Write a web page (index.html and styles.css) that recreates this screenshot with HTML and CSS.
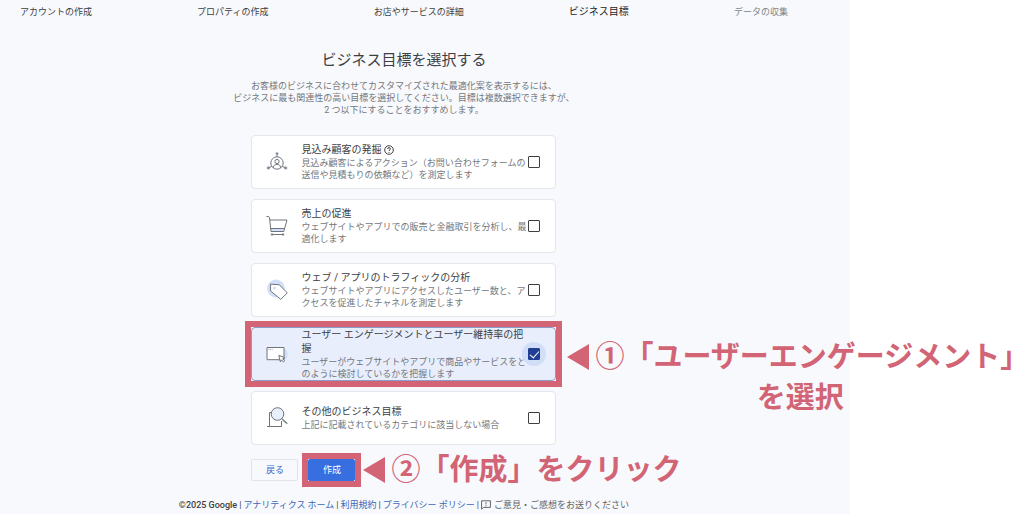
FILE: index.html
```
<!DOCTYPE html>
<html lang="ja">
  <head>
    <meta charset="UTF-8" />
    <meta name="viewport" content="width=device-width, initial-scale=1" />
    <title>ビジネス目標を選択する</title>
    <link rel="stylesheet" href="styles.css">
  </head>
  <body>
    <div class="app">
      <ol class="steps">
        <li>アカウントの作成</li>
        <li>プロパティの作成</li>
        <li>お店やサービスの詳細</li>
        <li class="current">ビジネス目標</li>
        <li class="upcoming">データの収集</li>
      </ol>

      <main>
        <h1>ビジネス目標を選択する</h1>
        <p class="intro">
          お客様のビジネスに合わせてカスタマイズされた最適化案を表示するには、<br />
          ビジネスに最も関連性の高い目標を選択してください。目標は複数選択できますが、<br />
          2 つ以下にすることをおすすめします。
        </p>

        <form class="goals">
          <label class="goal">
            <svg class="goal-icon" viewBox="0 0 22 22">
              <g class="tint">
                <circle cx="11" cy="2.5" r="1.8" />
                <circle cx="2" cy="17" r="1.8" />
                <circle cx="20" cy="17" r="1.8" />
              </g>
              <circle cx="11" cy="12" r="6.2" />
              <circle cx="11" cy="10.5" r="2.1" />
              <path d="M7.6 17v-1.2c0-1.5 1.3-2.3 3.4-2.3s3.4.8 3.4 2.3V17M11 5.8V2M9.8 3L11 1.8 12.2 3M5.8 15.3L2 17.2M2.3 15.5L1.6 17.4l2 .5M16.2 15.3l3.8 1.9M19.7 15.5l.7 1.9-2 .5" />
            </svg>
            <span class="goal-text">
              <span class="goal-title">見込み顧客の発掘
                <svg class="help" viewBox="0 0 10 10">
                  <circle cx="5" cy="5" r="4.3" />
                  <path d="M3.6 4c0-.9.6-1.4 1.4-1.4s1.4.5 1.4 1.3c0 1-1.4 1.1-1.4 2.1M5 7v.9" />
                </svg>
              </span>
              <span class="goal-desc">見込み顧客によるアクション（お問い合わせフォームの送信や見積もりの依頼など）を測定します</span>
            </span>
            <span class="check"><input type="checkbox" name="goal" /></span>
          </label>

          <label class="goal">
            <svg class="goal-icon" viewBox="0 0 22 22">
              <path class="tint" d="M4.6 13.5h14l-.8 3H5z" />
              <path d="M.5 1.5h1.7q1.2 0 1.3 1.2L5 16.5h12.8L21 5H3.8M4.7 13.5h13.8M5.5 19.5h12" />
              <circle cx="6" cy="19.5" r=".8" />
              <circle cx="17" cy="19.5" r=".8" />
            </svg>
            <span class="goal-text">
              <span class="goal-title">売上の促進</span>
              <span class="goal-desc">ウェブサイトやアプリでの販売と金融取引を分析し、最適化します</span>
            </span>
            <span class="check"><input type="checkbox" name="goal" /></span>
          </label>

          <label class="goal">
            <svg class="goal-icon" viewBox="0 0 22 22">
              <circle class="tint" cx="10" cy="9.5" r="9" />
              <path class="paper" d="M4.5 5.2l8.6.5 8.2 8.1-6.5 6.6L4.6 12z" />
              <circle class="tint" cx="8.5" cy="9" r="1.6" />
            </svg>
            <span class="goal-text">
              <span class="goal-title">ウェブ / アプリのトラフィックの分析</span>
              <span class="goal-desc">ウェブサイトやアプリにアクセスしたユーザー数と、アクセスを促進したチャネルを測定します</span>
            </span>
            <span class="check"><input type="checkbox" name="goal" /></span>
          </label>

          <div class="marked">
            <label class="goal selected">
              <svg class="goal-icon" viewBox="0 0 22 22">
                <circle class="tint" cx="15" cy="11.5" r="6.8" />
                <path class="paper" d="M1 4.5h17v12.2H1z" />
                <path d="M2.6 6.4h.6M4.2 6.4h.6M5.8 6.4h.6" />
                <path class="paper" d="M12.8 12.4l6 2.3-2.1 1.1 2 2.1-1.2 1.1-2-2.1-1.1 1.9z" />
              </svg>
              <span class="goal-text">
                <span class="goal-title">ユーザー エンゲージメントとユーザー維持率の把握</span>
                <span class="goal-desc">ユーザーがウェブサイトやアプリで商品やサービスをどのように検討しているかを把握します</span>
              </span>
              <span class="check"><input type="checkbox" name="goal" checked /></span>
            </label>
            <p class="note">
              <svg class="arrow" viewBox="0 0 22 26"><path d="M0 13L22 0v26z" /></svg>①「ユーザーエンゲージメント<span class="closing">」</span>
              <span class="second-line">を選択</span>
            </p>
          </div>

          <label class="goal">
            <svg class="goal-icon" viewBox="0 0 22 22">
              <path d="M6 5.5H3.5v14M1 19.5h14.5V14M1 19.5h3" />
              <circle class="lens" cx="11.5" cy="7" r="6.3" />
              <path d="M16 11.5l5.5 5" />
              <path d="M15.8 12.3l4.8 4.4" />
            </svg>
            <span class="goal-text">
              <span class="goal-title">その他のビジネス目標</span>
              <span class="goal-desc">上記に記載されているカテゴリに該当しない場合</span>
            </span>
            <span class="check"><input type="checkbox" name="goal" /></span>
          </label>

          <div class="actions">
            <button type="button" class="btn">戻る</button>
            <div class="marked">
              <button type="submit" class="btn primary">作成</button>
              <p class="note">
                <svg class="arrow" viewBox="0 0 22 26"><path d="M0 13L22 0v26z" /></svg>②「作成」をクリック
              </p>
            </div>
          </div>
        </form>
      </main>

      <footer>
        <span class="copyright">©2025 Google</span> |
        <a href="#">アナリティクス ホーム</a> |
        <a href="#">利用規約</a> |
        <a href="#">プライバシー ポリシー</a> |
        <button type="button" class="feedback">
          <svg viewBox="0 0 10 10"><path d="M.6.8h8.8v6.6H2.4L.6 9.2zM5 2.2v2.2M5 5.2v1" /></svg>
          ご意見・ご感想をお送りください
        </button>
      </footer>
    </div>
  </body>
</html>
```
FILE: styles.css
```
* {
  box-sizing: border-box;
}
body {
  margin: 0;
  background: #fff;
  color: #3c4043;
  font-family: Roboto, "Noto Sans CJK JP", sans-serif;
  font-size: 9px;
  line-height: 12px;
  overflow: hidden;
}
.app {
  width: 83%;
  min-height: 100vh;
  padding-right: 42px;
  background: #f8f9fc;
}
.steps {
  display: flex;
  justify-content: space-between;
  align-items: center;
  margin: 0;
  padding: 6px 20px 0;
  list-style: none;
}
.steps .current {
  font-size: 10px;
  color: #202124;
}
.steps .upcoming {
  color: #80868b;
}
main {
  display: flex;
  flex-direction: column;
  align-items: center;
}
h1 {
  margin: 32px 0 10px;
  font-size: 15px;
  font-weight: 400;
  line-height: 20px;
}
.intro {
  margin: 0 0 19px;
  text-align: center;
  color: #73777c;
}

/* goal cards */
.goals {
  display: flex;
  flex-direction: column;
  gap: 10px;
  width: 100%;
  max-width: 305px;
}
.goal {
  display: flex;
  align-items: center;
  min-height: 54px;
  padding: 0 15px 0 14px;
  border: 1px solid #e3e6ec;
  border-radius: 4px;
  background: #fff;
  cursor: pointer;
}
.goal.selected {
  border-color: #8b9cc9;
  background: #e8eefc;
}
.goal-icon {
  flex: none;
  width: 22px;
  height: 22px;
  margin-right: 13px;
  fill: none;
  stroke: #70757a;
  stroke-width: 1;
}
.goal-icon .tint {
  fill: #d2dff8;
  stroke: none;
}
.goal-icon .paper {
  fill: #fff;
}
.goal-icon .lens {
  fill: #e8f0fe;
}
.goal-text {
  flex: 1;
}
.goal-title {
  display: block;
  font-size: 10px;
  line-height: 14px;
}
.goal-desc {
  display: block;
  color: #73777c;
}
.help {
  width: 10px;
  height: 10px;
  vertical-align: middle;
  fill: none;
  stroke: #3c4043;
}
.check {
  position: relative;
  display: flex;
}
.check input {
  position: relative;
  appearance: none;
  width: 12px;
  height: 12px;
  margin: 0;
  border: 1px solid #3c4043;
  border-radius: 1px;
}
.selected .check::before {
  content: "";
  position: absolute;
  inset: -6px;
  border-radius: 50%;
  background: #d0def8;
}
.check input:checked {
  border-color: #223f94;
  background: #223f94;
}
.check input:checked::after {
  content: "";
  position: absolute;
  top: 0;
  left: 3px;
  width: 4px;
  height: 8px;
  border: solid #fff;
  border-width: 0 1px 1px 0;
  transform: rotate(42deg);
}

/* buttons */
.actions {
  display: flex;
  gap: 10px;
  margin-top: 4px;
}
.btn {
  display: block;
  width: 47px;
  height: 22px;
  padding: 0;
  border: 1px solid #e0e3e9;
  border-radius: 2px;
  background: transparent;
  color: #3566c4;
  font: inherit;
}
.btn.primary {
  border-color: #376fe0;
  background: #376fe0;
  color: #fff;
}

/* red frames and notes */
.marked {
  position: relative;
}
.marked::after {
  content: "";
  position: absolute;
  inset: -6px;
  border: 6px solid #d26475;
  pointer-events: none;
}
.note {
  position: absolute;
  top: 50%;
  left: 100%;
  width: max-content;
  margin: -17px 0 0 11px;
  color: #d26475;
  font-size: 29px;
  font-weight: 700;
  line-height: 41px;
  text-align: center;
}
/* half-width closing bracket at the line end */
.closing {
  font-feature-settings: "halt";
}
.second-line {
  display: block;
  padding-left: 18px;
}
.actions .note {
  margin: -20px 0 0 8px;
}
.arrow {
  width: 22px;
  height: 26px;
  margin-right: 6px;
  vertical-align: -3px;
  fill: #d26475;
}

footer {
  display: flex;
  justify-content: center;
  gap: 2px;
  padding-top: 18px;
  white-space: nowrap;
}
footer a {
  color: #3c66b8;
  text-decoration: none;
}
.copyright {
  font-weight: 500;
}
.feedback {
  display: flex;
  align-items: center;
  gap: 3px;
  padding: 0;
  border: 0;
  background: none;
  color: #5f6368;
  font: inherit;
}
.feedback svg {
  width: 10px;
  height: 10px;
  fill: none;
  stroke: #5f6368;
}
```
